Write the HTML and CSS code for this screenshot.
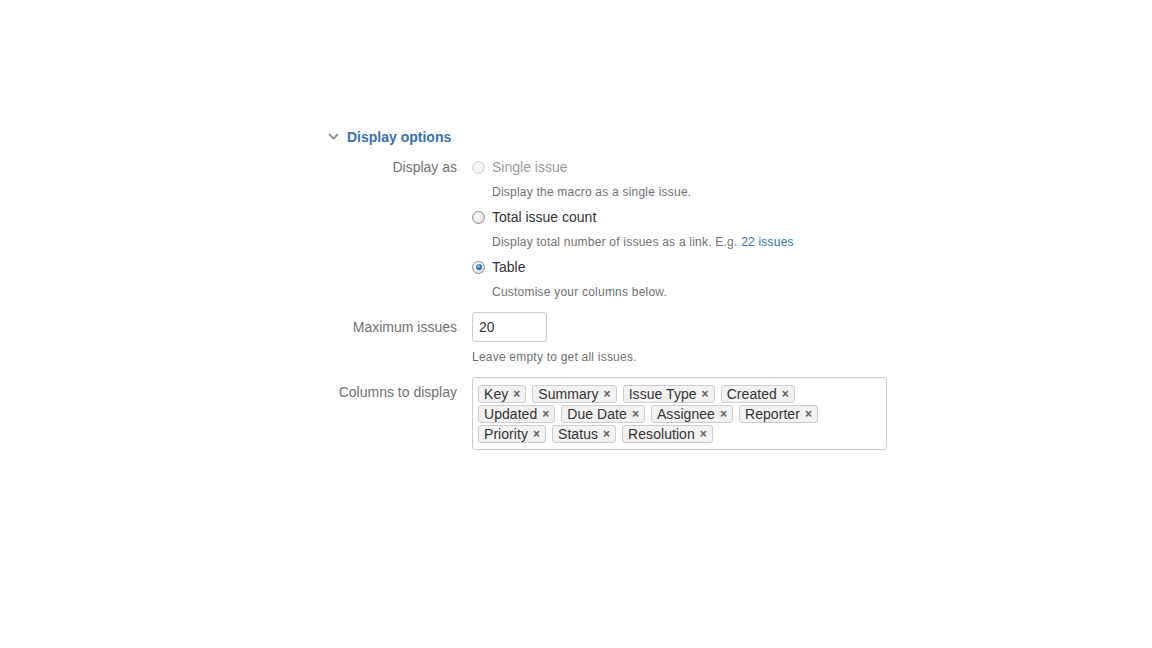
FILE: index.html
```html
<!DOCTYPE html>
<html>
<head>
<meta charset="utf-8">
<link rel="stylesheet" href="styles.css">
</head>
<body>
<div class="page">
  <div class="section-head">
    <svg class="chevron" width="11" height="7" viewBox="0 0 11 7"><path d="M1 1.2 L5.5 5.5 L10 1.2" fill="none" stroke="#8a8a8a" stroke-width="1.8"/></svg>
    <span class="section-title">Display options</span>
  </div>

  <div class="group group-tight">
    <div class="label">Display as</div>
    <div class="field">
      <div class="option">
        <div class="option-line disabled"><span class="radio radio-disabled"></span><span>Single issue</span></div>
        <div class="desc">Display the macro as a single issue.</div>
      </div>
      <div class="option">
        <div class="option-line"><span class="radio"></span><span>Total issue count</span></div>
        <div class="desc">Display total number of issues as a link. E.g. <a class="link">22 issues</a></div>
      </div>
      <div class="option">
        <div class="option-line"><span class="radio radio-checked"></span><span>Table</span></div>
        <div class="desc">Customise your columns below.</div>
      </div>
    </div>
  </div>

  <div class="group">
    <div class="label label-padded">Maximum issues</div>
    <div class="field">
      <div class="text-input">20</div>
      <div class="desc desc-after-input">Leave empty to get all issues.</div>
    </div>
  </div>

  <div class="group">
    <div class="label label-padded">Columns to display</div>
    <div class="field">
      <div class="tag-box">
        <span class="tag">Key<span class="x">×</span></span><span class="tag">Summary<span class="x">×</span></span><span class="tag">Issue Type<span class="x">×</span></span><span class="tag">Created<span class="x">×</span></span><span class="tag">Updated<span class="x">×</span></span><span class="tag">Due Date<span class="x">×</span></span><span class="tag">Assignee<span class="x">×</span></span><span class="tag">Reporter<span class="x">×</span></span><span class="tag">Priority<span class="x">×</span></span><span class="tag">Status<span class="x">×</span></span><span class="tag">Resolution<span class="x">×</span></span>
      </div>
    </div>
  </div>
</div>
</body>
</html>
```

FILE: styles.css
```css
html, body {
  margin: 0;
  padding: 0;
  background: #fff;
}
body {
  font-family: "Liberation Sans", Arial, sans-serif;
  font-size: 14px;
  color: #333;
}
.page {
  padding: 127px 0 0 307px;
}
.section-head {
  display: flex;
  align-items: center;
  height: 20px;
  margin-left: 21px;
  gap: 8px;
  margin-bottom: 10px;
}
.chevron {
  display: block;
  margin-top: -1px;
}
.section-title {
  font-weight: bold;
  color: #3572b0;
  line-height: 20px;
}
.group {
  display: grid;
  grid-template-columns: 150px 415px;
  column-gap: 15px;
  margin-bottom: 13px;
}
.group-tight {
  margin-bottom: 12px;
}
.label {
  text-align: right;
  color: #707070;
  line-height: 20px;
}
.label-padded {
  padding-top: 5px;
}
.option {
  margin-bottom: 7px;
}
.option:last-child {
  margin-bottom: 0;
}
.option-line {
  display: flex;
  align-items: center;
  gap: 7px;
  line-height: 20px;
  color: #333;
}
.option-line.disabled {
  color: #999;
}
.radio {
  box-sizing: border-box;
  width: 13px;
  height: 13px;
  border-radius: 50%;
  border: 1px solid #8e8f8f;
  background: radial-gradient(circle at 40% 35%, #ffffff 0%, #eeeeee 45%, #cfcfcf 100%);
  position: relative;
}
.radio-disabled {
  border-color: #d0d0d0;
  background: radial-gradient(circle at 40% 35%, #fafafa 0%, #eeeeee 60%, #e2e2e2 100%);
}
.radio-checked::after {
  content: "";
  position: absolute;
  left: 2.5px;
  top: 2.5px;
  width: 6px;
  height: 6px;
  border-radius: 50%;
  background: radial-gradient(circle at 40% 35%, #8fd0f5 0%, #1f6fb4 55%, #0b3b6e 100%);
}
.desc {
  font-size: 12px;
  line-height: 16px;
  color: #707070;
  margin-top: 7px;
  padding-left: 20px;
  letter-spacing: 0.22px;
}
.desc-after-input {
  padding-left: 0;
  margin-top: 7px;
  margin-bottom: -1px;
}
.link {
  color: #3572b0;
  text-decoration: none;
}
.text-input {
  box-sizing: border-box;
  width: 75px;
  height: 30px;
  border: 1px solid #cccccc;
  border-radius: 3px;
  box-shadow: inset 0 1px 2px rgba(0,0,0,0.06);
  padding: 0 6px;
  line-height: 28px;
  color: #333;
}
.tag-box {
  box-sizing: border-box;
  width: 415px;
  min-height: 73px;
  border: 1px solid #cccccc;
  border-radius: 3px;
  box-shadow: inset 0 1px 2px rgba(0,0,0,0.06);
  padding: 7px 16px 4px 5px;
  display: flex;
  flex-wrap: wrap;
  align-content: flex-start;
  row-gap: 2px;
  column-gap: 6px;
}
.tag {
  box-sizing: border-box;
  height: 18px;
  display: inline-flex;
  align-items: center;
  border: 1px solid #cccccc;
  border-radius: 3px;
  background: #f2f2f2;
  padding: 0 5px 0 5px;
  line-height: 16px;
  color: #333;
  letter-spacing: 0.05px;
}
.x {
  margin-left: 5px;
  color: #606060;
  font-weight: bold;
  font-size: 12px;
}
```
